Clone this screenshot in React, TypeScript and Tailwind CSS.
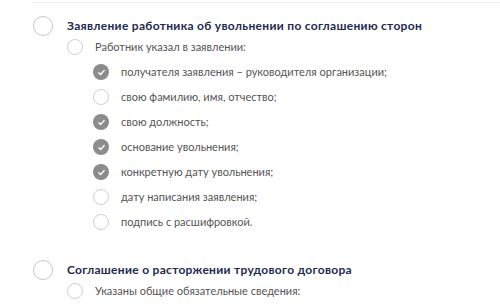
import React from 'react';

type Item = { text: string; checked: boolean };

const firstItems: Item[] = [
  { text: 'получателя заявления – руководителя организации;', checked: true },
  { text: 'свою фамилию, имя, отчество;', checked: false },
  { text: 'свою должность;', checked: true },
  { text: 'основание увольнения;', checked: true },
  { text: 'конкретную дату увольнения;', checked: true },
  { text: 'дату написания заявления;', checked: false },
  { text: 'подпись с расшифровкой.', checked: false },
];

const Check = ({ checked }: { checked: boolean }) =>
  checked ? (
    <span className="w-4 h-4 rounded-full bg-[#8c8c8c] flex items-center justify-center shrink-0">
      <svg width="9" height="9" viewBox="0 0 10 10" fill="none">
        <path d="M2 5.2l2 2 4-4.4" stroke="#fff" strokeWidth="1.4" strokeLinecap="round" strokeLinejoin="round" />
      </svg>
    </span>
  ) : (
    <span className="w-4 h-4 rounded-full border border-[#cfcfcf] bg-white shrink-0" />
  );

const Section = ({ title, sub, items }: { title: string; sub: string; items: Item[] }) => (
  <div className="flex flex-col">
    <div className="flex items-center h-[22px]">
      <span className="w-5 h-5 rounded-full border border-[#c8c8c8] bg-white shrink-0 ml-[33px]" />
      <span className="ml-[14px] text-[12px] font-bold text-[#1e2a4f] tracking-[0.3px]">{title}</span>
    </div>
    <div className="flex items-center h-[16px] mt-[2px] ml-[67px]">
      <span className="w-4 h-4 rounded-full border border-[#cfcfcf] bg-white shrink-0" />
      <span className="ml-3 text-[11px] text-[#555]">{sub}</span>
    </div>
    {items.length > 0 && (
      <div className="flex flex-col gap-[9px] mt-[9px] ml-[93px]">
        {items.map((it) => (
          <div key={it.text} className="flex items-center h-[16px]">
            <Check checked={it.checked} />
            <span className="ml-3 text-[11px] text-[#555]">{it.text}</span>
          </div>
        ))}
      </div>
    )}
  </div>
);

export default function App() {
  return (
    <div className="w-[500px] h-[307px] bg-white overflow-hidden relative" style={{ fontFamily: 'Lato, "Open Sans", sans-serif' }}>
      <div className="ml-[33px] mt-[2px] h-px bg-[#eeeeee]" />
      <div className="pt-[12px]">
        <Section
          title="Заявление работника об увольнении по соглашению сторон"
          sub="Работник указал в заявлении:"
          items={firstItems}
        />
      </div>
      <div className="mt-[29px]">
        <Section
          title="Соглашение о расторжении трудового договора"
          sub="Указаны общие обязательные сведения:"
          items={[]}
        />
      </div>
    </div>
  );
}
